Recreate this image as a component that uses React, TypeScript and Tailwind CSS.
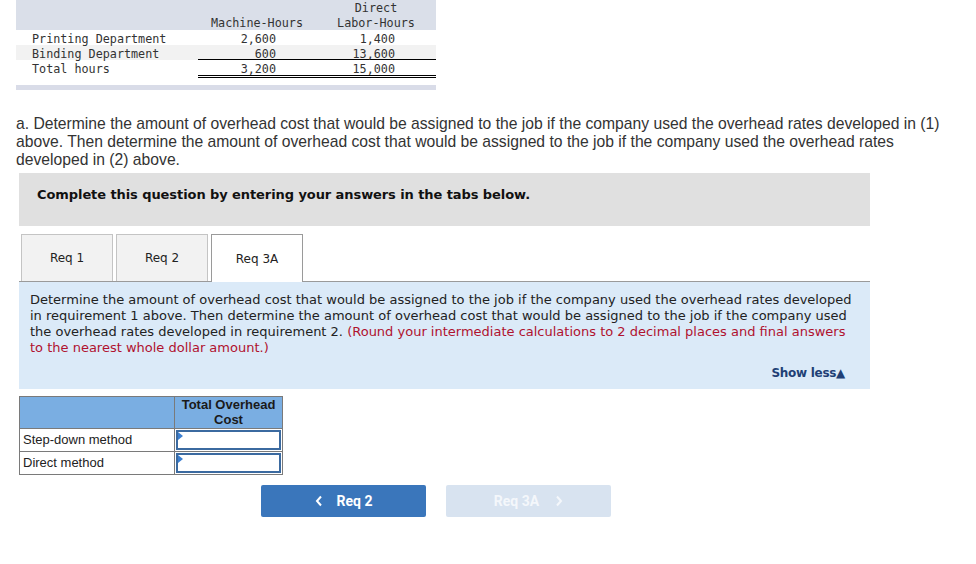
import React from "react";

const mono = { fontFamily: '"DejaVu Sans Mono", "Liberation Mono", monospace' };

export default function App() {
  return (
    <div className="w-[976px] h-[564px] bg-white relative overflow-hidden text-[#222]">
      {/* top data table */}
      <div className="ml-[16px] w-[420px] text-[11.75px] leading-[15px] text-[#333]" style={mono}>
        <div className="bg-[#dadfe9] h-[30px] flex">
          <div className="w-[182px]" />
          <div className="w-[118px] flex flex-col justify-end text-center leading-[15px]">
            <span className="relative top-[1px]">Machine-Hours</span>
          </div>
          <div className="w-[120px] flex flex-col justify-end text-center leading-[15px]">
            <span className="relative top-[1px]">Direct</span>
            <span className="relative top-[1px]">Labor-Hours</span>
          </div>
        </div>
        <div className="flex h-[15px] leading-[19px]">
          <div className="w-[182px] pl-[16px]">Printing Department</div>
          <div className="w-[118px] text-right pr-[40px]">2,600</div>
          <div className="w-[120px] text-right pr-[41px]">1,400</div>
        </div>
        <div className="flex h-[15px] bg-[#f2f2f2] leading-[19px]">
          <div className="w-[182px] pl-[16px]">Binding Department</div>
          <div className="w-[118px] text-right pr-[40px] border-b border-black h-[15px] overflow-visible">600</div>
          <div className="w-[120px] text-right pr-[41px] border-b border-black h-[15px] overflow-visible">13,600</div>
        </div>
        <div className="flex h-[18px] leading-[17px]">
          <div className="w-[182px] pl-[16px] pt-[1px]">Total hours</div>
          <div className="w-[118px] text-right pr-[40px] border-b-[3px] border-double border-black pt-[1px]">3,200</div>
          <div className="w-[120px] text-right pr-[41px] border-b-[3px] border-double border-black pt-[1px]">15,000</div>
        </div>
        <div className="h-[7px]" />
        <div className="h-[5px] bg-[#d9dce8]" />
      </div>

      {/* question paragraph */}
      <p
        className="ml-[16px] mt-[25px] w-[945px] text-[15.7px] leading-[18px] text-[#333]"
        style={{ fontFamily: '"Liberation Sans", Arial, sans-serif' }}
      >
        a. Determine the amount of overhead cost that would be assigned to the job if the company used the overhead rates developed in (1) above. Then determine the amount of overhead cost that would be assigned to the job if the company used the overhead rates developed in (2) above.
      </p>

      {/* instruction box */}
      <div
        className="ml-[19px] mt-[4px] w-[851px] h-[53px] bg-[#e0e0e0] pl-[18px] pt-[14px] leading-[16px] text-[13px] font-bold text-[#111]"
        style={{ fontFamily: '"DejaVu Sans", Verdana, sans-serif', letterSpacing: "-0.08px" }}
      >
        Complete this question by entering your answers in the tabs below.
      </div>

      {/* tabs */}
      <div
        className="ml-[19px] mt-[8px] w-[851px] flex items-end gap-[3px] pl-[2px] border-b border-[#9a9a9a] h-[48px] text-[12px] text-[#222]"
        style={{ fontFamily: '"DejaVu Sans", Verdana, sans-serif' }}
      >
        <div className="w-[92px] h-[47px] bg-[#f2f2f2] border border-b-0 border-[#c4c4c4] flex items-center justify-center">Req 1</div>
        <div className="w-[92px] h-[47px] bg-[#f2f2f2] border border-b-0 border-[#c4c4c4] flex items-center justify-center">Req 2</div>
        <div className="w-[92px] h-[48px] bg-white border border-b-0 border-[#9a9a9a] flex items-center justify-center -mb-[1px]">Req 3A</div>
      </div>

      {/* instructions panel */}
      <div
        className="ml-[19px] w-[851px] h-[107px] bg-[#dbeaf8] pl-[11px] pr-[16px] pt-[10px] text-[13px] leading-[16px] text-[#222]"
        style={{ fontFamily: '"DejaVu Sans", Verdana, sans-serif' }}
      >
        <p>
          Determine the amount of overhead cost that would be assigned to the job if the company used the overhead rates developed in requirement 1 above. Then determine the amount of overhead cost that would be assigned to the job if the company used the overhead rates developed in requirement 2.{" "}
          <span className="text-[#b0122f]">(Round your intermediate calculations to 2 decimal places and final answers to the nearest whole dollar amount.)</span>
        </p>
        <div className="flex justify-end mt-[9px] pr-[9px]">
          <span className="font-bold text-[#213f75] text-[12px]" style={{ letterSpacing: "-0.3px" }}>
            Show less▲
          </span>
        </div>
      </div>

      {/* answer table */}
      <div
        className="ml-[19px] mt-[7px] w-[264px] border border-[#7a7a7a] text-[13px] text-[#222]"
        style={{ fontFamily: '"Liberation Sans", Arial, sans-serif' }}
      >
        <div className="flex h-[32px] bg-[#7aaee2] border-b border-[#7a7a7a]">
          <div className="w-[155px] border-r border-[#7a7a7a]" />
          <div className="flex-1 text-center font-bold leading-[15px] pt-[0px] text-[#1a1a1a]">
            Total Overhead
            <br />
            Cost
          </div>
        </div>
        <div className="flex h-[23px] border-b border-[#7a7a7a]">
          <div className="w-[155px] border-r border-[#7a7a7a] flex items-center pl-[3px]">Step-down method</div>
          <div className="flex-1 p-[1px]">
            <div className="relative h-full border-2 border-[#3b6aa0] bg-white">
              <div className="absolute left-0 top-0 w-0 h-0 border-t-[4px] border-b-[4px] border-l-[5px] border-t-transparent border-b-transparent border-l-[#3c7fd0]" />
            </div>
          </div>
        </div>
        <div className="flex h-[22px]">
          <div className="w-[155px] border-r border-[#7a7a7a] flex items-center pl-[3px]">Direct method</div>
          <div className="flex-1 p-[1px]">
            <div className="relative h-full border-2 border-[#3b6aa0] bg-white">
              <div className="absolute left-0 top-0 w-0 h-0 border-t-[4px] border-b-[4px] border-l-[5px] border-t-transparent border-b-transparent border-l-[#3c7fd0]" />
            </div>
          </div>
        </div>
      </div>

      {/* nav buttons */}
      <div
        className="ml-[261px] mt-[10px] flex gap-[20px] text-[14px] font-bold"
        style={{ fontFamily: 'Roboto, "Liberation Sans", sans-serif' }}
      >
        <div className="w-[165px] h-[32px] rounded-[2px] bg-[#3a76bb] text-white flex items-center justify-center gap-[14px]">
          <svg width="8" height="12" viewBox="0 0 8 12">
            <path d="M6 1.5 L2 6 L6 10.5" stroke="white" strokeWidth="2" fill="none" />
          </svg>
          <span>Req 2</span>
        </div>
        <div className="w-[165px] h-[32px] rounded-[2px] bg-[#d8e3f0] text-[#f4f7fb] flex items-center justify-center gap-[16px]">
          <span>Req 3A</span>
          <svg width="8" height="12" viewBox="0 0 8 12">
            <path d="M2 1.5 L6 6 L2 10.5" stroke="#f4f7fb" strokeWidth="2" fill="none" />
          </svg>
        </div>
      </div>
    </div>
  );
}
